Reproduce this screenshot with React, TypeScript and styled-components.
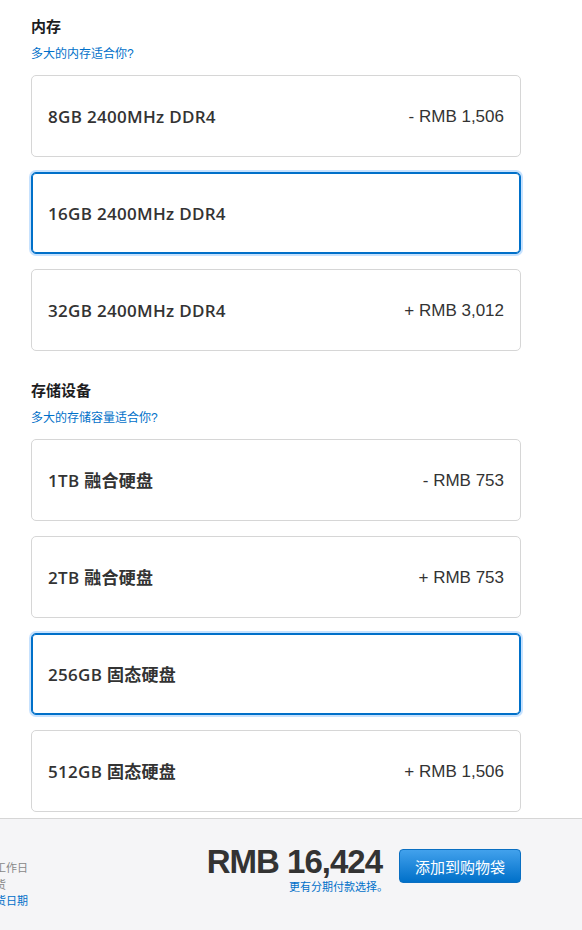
import styled, { createGlobalStyle } from "styled-components";

type Option = {
  label: string;
  price?: string;
  selected?: boolean;
};

const memoryOptions: Option[] = [
  { label: "8GB 2400MHz DDR4", price: "- RMB 1,506" },
  { label: "16GB 2400MHz DDR4", selected: true },
  { label: "32GB 2400MHz DDR4", price: "+ RMB 3,012" },
];

const storageOptions: Option[] = [
  { label: "1TB 融合硬盘", price: "- RMB 753" },
  { label: "2TB 融合硬盘", price: "+ RMB 753" },
  { label: "256GB 固态硬盘", selected: true },
  { label: "512GB 固态硬盘", price: "+ RMB 1,506" },
];

const GlobalStyle = createGlobalStyle`
  body {
    margin: 0;
    background: #fff;
    color: #333;
    font-family: "Liberation Sans", "Noto Sans CJK SC", sans-serif;
    overflow: hidden;
  }
`;

const Section = ({
  title,
  link,
  options,
}: {
  title: string;
  link: string;
  options: Option[];
}) => (
  <SectionWrapper>
    <Heading>{title}</Heading>
    <HelpLink>{link}</HelpLink>
    <OptionList>
      {options.map((o) => (
        <Card key={o.label} $selected={!!o.selected}>
          <Label>{o.label}</Label>
          {o.price && <Price>{o.price}</Price>}
        </Card>
      ))}
    </OptionList>
  </SectionWrapper>
);

export default function App() {
  return (
    <>
      <GlobalStyle />
      <Main>
        <Section title="内存" link="多大的内存适合你?" options={memoryOptions} />
        <Section
          title="存储设备"
          link="多大的存储容量适合你?"
          options={storageOptions}
        />
      </Main>
      <Footer>
        <FooterInner>
          <Delivery>
            <DeliveryLine>需三个工作日</DeliveryLine>
            <DeliveryLine>之后发货</DeliveryLine>
            <DeliveryLine $link>查看送货日期</DeliveryLine>
          </Delivery>
          <Summary>
            <Total>
              <TotalPrice>RMB 16,424</TotalPrice>
              <Installments>更有分期付款选择。</Installments>
            </Total>
            <AddButton>添加到购物袋</AddButton>
          </Summary>
        </FooterInner>
      </Footer>
    </>
  );
}

const Main = styled.main`
  width: 490px;
  padding: 17px 0 0 31px;
  display: flex;
  flex-direction: column;
  gap: 30px;
`;

const SectionWrapper = styled.section`
  display: flex;
  flex-direction: column;
`;

const Heading = styled.h2`
  margin: 0;
  font-size: 15px;
  line-height: 20px;
  font-weight: 700;
  color: #1d1d1f;
`;

const HelpLink = styled.a`
  margin-top: 9px;
  font-size: 12px;
  line-height: 16px;
  color: #0070c9;
  cursor: pointer;
`;

const OptionList = styled.div`
  margin-top: 13px;
  display: flex;
  flex-direction: column;
  gap: 15px;
`;

const Card = styled.div<{ $selected: boolean }>`
  box-sizing: border-box;
  height: 82px;
  padding: 0 16px;
  display: flex;
  align-items: center;
  justify-content: space-between;
  border-radius: 5px;
  border: 1px solid ${(p) => (p.$selected ? "#0070c9" : "#d6d6d6")};
  background: #fff;
  box-shadow: ${(p) =>
    p.$selected
      ? "inset 0 0 0 1px #0070c9, 0 0 0 2px rgba(0, 125, 250, 0.22)"
      : "none"};
`;

const Label = styled.span`
  font-family: "Open Sans", "Noto Sans CJK SC", sans-serif;
  font-size: 17px;
  line-height: 22px;
  font-weight: 600;
  letter-spacing: 0.3px;
  color: #333;
  margin-top: 1px;
`;

const Price = styled.span`
  font-size: 17px;
  line-height: 22px;
  color: #333;
  margin-top: 2px;
`;

const Footer = styled.footer`
  margin-top: 6px;
  min-height: 130px;
  border-top: 1px solid #d6d6d6;
  background: #f5f5f7;
`;

const FooterInner = styled.div`
  width: 490px;
  margin-left: 31px;
  padding-top: 25px;
  display: flex;
  justify-content: space-between;
  align-items: flex-start;
`;

const Delivery = styled.div`
  margin-left: -69px;
  margin-top: 16px;
  display: flex;
  flex-direction: column;
`;

const DeliveryLine = styled.span<{ $link?: boolean }>`
  font-size: 11px;
  line-height: 16.5px;
  color: ${(p) => (p.$link ? "#0070c9" : "#888")};
`;

const Summary = styled.div`
  display: flex;
  align-items: flex-start;
  gap: 17px;
`;

const Total = styled.div`
  display: flex;
  flex-direction: column;
  align-items: flex-end;
`;

const TotalPrice = styled.span`
  font-size: 33px;
  line-height: 36px;
  font-weight: 700;
  letter-spacing: -1px;
  color: #333;
`;

const Installments = styled.a`
  font-size: 11px;
  line-height: 14px;
  color: #0070c9;
  margin-right: -6px;
`;

const AddButton = styled.button`
  margin-top: 5px;
  width: 122px;
  height: 34px;
  border: 1px solid #0a6fc2;
  border-radius: 4px;
  background: linear-gradient(#42a1ec, #0070c9);
  color: #fff;
  font-family: inherit;
  font-size: 15px;
  cursor: pointer;
`;
